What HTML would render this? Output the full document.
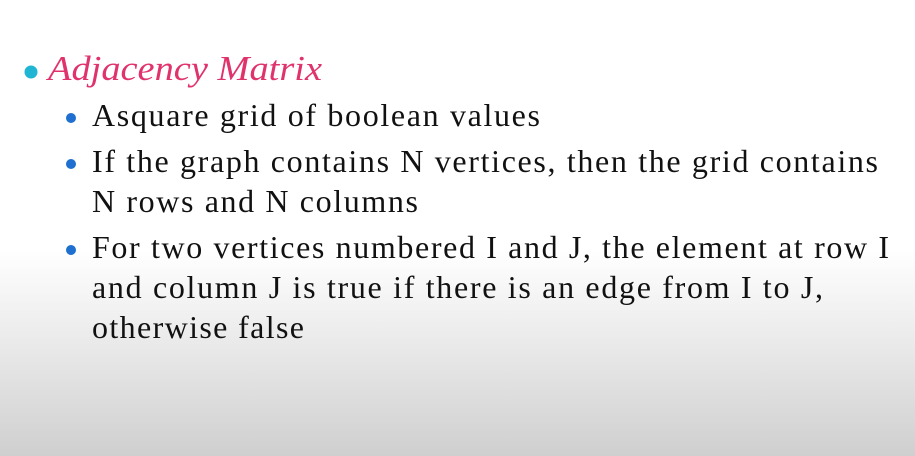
<!DOCTYPE html>
<html><head><style>
html,body{margin:0;padding:0;}
body{width:915px;height:456px;overflow:hidden;background:linear-gradient(to bottom,#fff 0px,#fff 250px,#e6e6e6 360px,#cfcfcf 456px);}
svg{position:absolute;left:0;top:0;}
text{font-family:"Liberation Serif",serif;font-size:32px;fill:#111;}
</style></head><body>
<svg width="915" height="456">
<circle cx="31" cy="72" r="6.5" fill="#1fb5d3"/>
<text x="48" y="80" textLength="274" lengthAdjust="spacingAndGlyphs" style="font-style:italic;font-size:35px;fill:#e0336c">Adjacency Matrix</text>
<circle cx="71" cy="118" r="5" fill="#1e6fd0"/>
<text x="92" y="126" textLength="448" lengthAdjust="spacing">Asquare grid of boolean values</text>
<circle cx="71" cy="164" r="5" fill="#1e6fd0"/>
<text x="92" y="172" textLength="786" lengthAdjust="spacing">If the graph contains N vertices, then the grid contains</text>
<text x="92" y="212" textLength="326" lengthAdjust="spacing">N rows and N columns</text>
<circle cx="71" cy="250" r="5" fill="#1e6fd0"/>
<text x="92" y="258" textLength="797" lengthAdjust="spacing">For two vertices numbered I and J, the element at row I</text>
<text x="92" y="298" textLength="731" lengthAdjust="spacing">and column J is true if there is an edge from I to J,</text>
<text x="92" y="338" textLength="212" lengthAdjust="spacing">otherwise false</text>
</svg>
</body></html>
